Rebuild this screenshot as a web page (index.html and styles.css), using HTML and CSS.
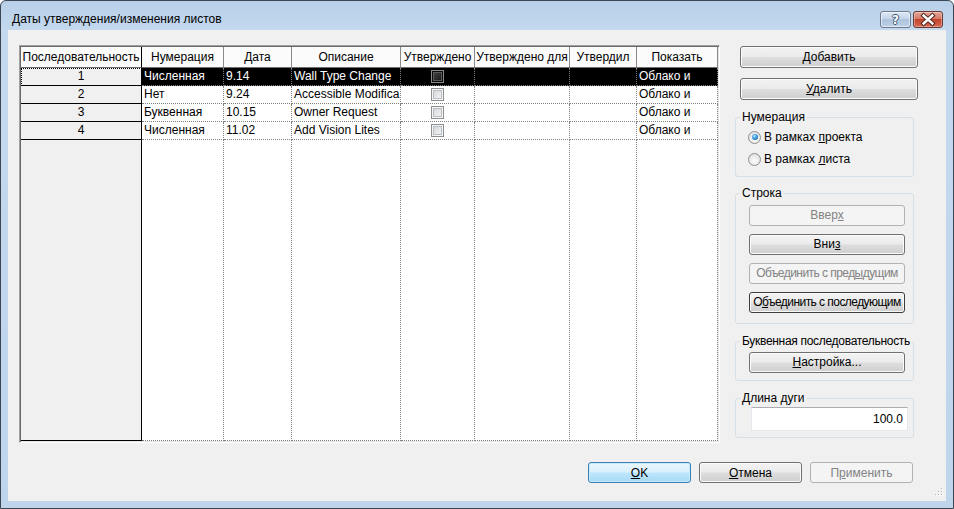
FILE: index.html
```html
<!DOCTYPE html>
<html lang="ru">
<head>
  <meta charset="UTF-8">
  <title>Даты утверждения/изменения листов</title>
  <link rel="stylesheet" href="styles.css">
</head>
<body>
<div class="window">
  <div class="titlebar">
    <span class="title">Даты утверждения/изменения листов</span>
    <div class="caption">
      <button class="cap cap-help">?</button>
      <button class="cap cap-close">
        <svg width="29" height="15" viewBox="0 0 29 15">
          <path d="M10 3.5 L19 11.5 M19 3.5 L10 11.5" stroke="#4b2520" stroke-width="4.6" stroke-linecap="square"/>
          <path d="M10 3.5 L19 11.5 M19 3.5 L10 11.5" stroke="#fff" stroke-width="2.6" stroke-linecap="square"/>
        </svg>
      </button>
    </div>
  </div>

  <div class="client">
    <div class="main">
      <div class="sheet">
        <div class="row head">
          <div class="cell rh">Последовательность</div>
          <div class="cell">Нумерация</div>
          <div class="cell">Дата</div>
          <div class="cell">Описание</div>
          <div class="cell">Утверждено</div>
          <div class="cell">Утверждено для</div>
          <div class="cell">Утвердил</div>
          <div class="cell">Показать</div>
        </div>
        <div class="row sel">
          <div class="cell rh focus">1</div>
          <div class="cell">Численная</div>
          <div class="cell">9.14</div>
          <div class="cell">Wall Type Change</div>
          <div class="cell chk"><span class="box"></span></div>
          <div class="cell"></div>
          <div class="cell"></div>
          <div class="cell">Облако и</div>
        </div>
        <div class="row">
          <div class="cell rh">2</div>
          <div class="cell">Нет</div>
          <div class="cell">9.24</div>
          <div class="cell">Accessible Modifica</div>
          <div class="cell chk"><span class="box"></span></div>
          <div class="cell"></div>
          <div class="cell"></div>
          <div class="cell">Облако и</div>
        </div>
        <div class="row">
          <div class="cell rh">3</div>
          <div class="cell">Буквенная</div>
          <div class="cell">10.15</div>
          <div class="cell">Owner Request</div>
          <div class="cell chk"><span class="box"></span></div>
          <div class="cell"></div>
          <div class="cell"></div>
          <div class="cell">Облако и</div>
        </div>
        <div class="row">
          <div class="cell rh">4</div>
          <div class="cell">Численная</div>
          <div class="cell">11.02</div>
          <div class="cell">Add Vision Lites</div>
          <div class="cell chk"><span class="box"></span></div>
          <div class="cell"></div>
          <div class="cell"></div>
          <div class="cell">Облако и</div>
        </div>
        <div class="row filler">
          <div class="cell rh"></div>
          <div class="cell"></div>
          <div class="cell"></div>
          <div class="cell"></div>
          <div class="cell"></div>
          <div class="cell"></div>
          <div class="cell"></div>
          <div class="cell"></div>
        </div>
      </div>

      <div class="side">
        <button class="btn wide"><u>Д</u>обавить</button>
        <button class="btn wide gap"><u>У</u>далить</button>

        <fieldset class="group">
          <legend>Нумерация</legend>
          <div class="body b-num">
            <label class="radio on"><span class="dot"></span><span>В рамках <u>п</u>роекта</span></label>
            <label class="radio"><span class="dot"></span><span>В рамках <u>л</u>иста</span></label>
          </div>
        </fieldset>

        <fieldset class="group g-row">
          <legend>Строка</legend>
          <div class="body b-row">
            <div class="btn inner off">Ввер<u>х</u></div>
            <div class="btn inner">Вни<u>з</u></div>
            <div class="btn inner long off">Объединить с пред<u>ы</u>дущим</div>
            <div class="btn inner long strong">О<u>б</u>ъединить с последующим</div>
          </div>
        </fieldset>

        <fieldset class="group">
          <legend class="tight">Буквенная последовательность</legend>
          <div class="body b-alpha">
            <div class="btn inner"><u>Н</u>астройка...</div>
          </div>
        </fieldset>

        <fieldset class="group">
          <legend><u>Д</u>лина дуги</legend>
          <div class="body b-arc">
            <div class="field">100.0</div>
          </div>
        </fieldset>
      </div>
    </div>

    <div class="footer">
      <button class="btn foot def"><u>О</u>K</button>
      <button class="btn foot"><u>О</u>тмена</button>
      <button class="btn foot off">П<u>р</u>именить</button>
    </div>

    <svg class="grip" width="10" height="10" viewBox="0 0 10 10">
      <rect x="8" y="0" width="1" height="1" fill="#b8b8b8"/>
      <rect x="5" y="3" width="1" height="1" fill="#b8b8b8"/>
      <rect x="8" y="3" width="1" height="1" fill="#b8b8b8"/>
      <rect x="2" y="6" width="1" height="1" fill="#b8b8b8"/>
      <rect x="5" y="6" width="1" height="1" fill="#b8b8b8"/>
      <rect x="8" y="6" width="1" height="1" fill="#b8b8b8"/>
      <rect x="9" y="1" width="1" height="1" fill="#fff"/>
      <rect x="6" y="4" width="1" height="1" fill="#fff"/>
      <rect x="9" y="4" width="1" height="1" fill="#fff"/>
      <rect x="3" y="7" width="1" height="1" fill="#fff"/>
      <rect x="6" y="7" width="1" height="1" fill="#fff"/>
      <rect x="9" y="7" width="1" height="1" fill="#fff"/>
    </svg>
  </div>
</div>
</body>
</html>
```

FILE: styles.css
```css
body {
  margin: 0;
  background-color: #ffffff;
  font-family: "Liberation Sans", Arial, sans-serif;
  font-size: 12px;
  color: #000000;
}
.window {
  width: 954px;
  height: 509px;
  box-sizing: border-box;
  border: 1px solid #3b4652;
  border-radius: 6px 6px 0 0;
  background: linear-gradient(#b7cfe8, #c4d9ee 30px, #bfd5ec);
  padding: 0 7px 7px;
  display: flex;
  flex-direction: column;
}
.titlebar {
  height: 29px;
  display: flex;
  justify-content: space-between;
  align-items: flex-start;
  padding: 0 3px 0 4px;
}
.title {
  margin-top: 11px;
  line-height: 14px;
}
.caption {
  display: flex;
  gap: 2px;
  margin-top: 10px;
}
.cap {
  width: 31px;
  height: 17px;
  padding: 0;
  border-radius: 3px;
  display: flex;
  align-items: center;
  justify-content: center;
}
.cap-help {
  border: 1px solid #6b7a8c;
  background: linear-gradient(#dce7f3, #c5d6e9 45%, #adc3dc 50%, #bdd2e8);
  box-shadow: inset 0 0 0 1px rgba(255, 255, 255, 0.55);
  color: #ffffff;
  font-family: "DejaVu Sans", sans-serif;
  font-weight: bold;
  font-size: 12px;
  text-shadow: 1px 0 #3f5672, -1px 0 #3f5672, 0 1px #3f5672, 0 -1px #3f5672;
}
.cap-close {
  width: 30px;
  border: 1px solid #6a3a32;
  background: linear-gradient(#e4a596, #d47a68 45%, #c4432e 50%, #d56a4f);
  box-shadow: inset 0 0 0 1px rgba(255, 255, 255, 0.35);
}
.client {
  flex: 1;
  position: relative;
  background-color: #f0f0f0;
  padding: 15px 0 0 11px;
}
.main {
  display: flex;
  align-items: flex-start;
}

/* grid */
.sheet {
  width: 697px;
  height: 394px;
  border: 1px solid;
  border-color: #a0a0a0 #ffffff #ffffff #a0a0a0;
  padding: 1px;
  box-shadow: inset 1px 1px #696969, inset -1px -1px #e3e3e3;
  background-color: #ffffff;
  display: flex;
  flex-direction: column;
}
.row {
  display: grid;
  grid-template-columns: 121px 82px 68px 109px 74px 95px 67px 81px;
  height: 18px;
}
.cell {
  box-sizing: border-box;
  border-right: 1px dotted #808080;
  border-bottom: 1px dotted #808080;
  padding: 0 2px;
  line-height: 17px;
  white-space: nowrap;
  overflow: hidden;
}
.cell.rh {
  background-color: #f0f0f0;
  border-right: 1px solid #000000;
  border-bottom: 1px solid #000000;
  text-align: center;
}
.head {
  height: 21px;
}
.head .cell {
  background-color: #fbfbfb;
  border-right: 1px solid #8a8a8a;
  border-bottom: 1px solid #6e6e6e;
  text-align: center;
  line-height: 20px;
  padding: 0 1px;
}
.head .cell.rh {
  border-right-color: #000000;
  background-color: #fbfbfb;
}
.sel .cell {
  background-color: #000000;
  color: #ffffff;
}
.sel .cell.rh {
  background-color: #f0f0f0;
  color: #000000;
}
.focus {
  outline: 1px dotted #000000;
  outline-offset: -1px;
}
.filler {
  flex: 1;
}
.chk {
  display: flex;
  align-items: center;
  justify-content: center;
}
.box {
  width: 13px;
  height: 13px;
  box-sizing: border-box;
  border: 1px solid #8e8f8f;
  background: linear-gradient(135deg, #cfd3d8, #f8f8f8);
  box-shadow: inset 0 0 0 1px #f6f6f6, inset 0 0 0 2px #b9bec4;
}
.sel .box {
  border-color: #8a8a8a;
  background: linear-gradient(135deg, #4a4a4a, #111111);
  box-shadow: inset 0 0 0 1px #0a0a0a, inset 0 0 0 2px #5a5a5a;
}

/* right column */
.side {
  width: 183px;
  margin-left: 15px;
  padding-top: 1px;
  display: flex;
  flex-direction: column;
}
.btn {
  box-sizing: border-box;
  height: 21px;
  padding: 0;
  border: 1px solid #707070;
  border-radius: 3px;
  background: linear-gradient(#f3f3f3, #ebebeb 48%, #dddddd 52%, #cfcfcf);
  box-shadow: inset 0 0 0 1px #fbfbfb;
  font: inherit;
  color: #000000;
  white-space: nowrap;
  overflow: hidden;
}
.btn.off {
  border-color: #adb2b5;
  background: #f4f4f4;
  box-shadow: none;
  color: #838383;
}
.btn.wide {
  width: 178px;
  height: 22px;
  margin-left: 5px;
}
.btn.gap {
  margin-top: 10px;
}
.group {
  box-sizing: border-box;
  width: 179px;
  min-width: 0;
  margin: 10px 0 0;
  padding: 0;
  border: 1px solid #d5dfe5;
  border-radius: 3px;
}
.group legend {
  margin-left: 4px;
  padding: 0 2px;
  line-height: 14px;
  white-space: nowrap;
}
.group legend.tight {
  letter-spacing: -0.3px;
}
.body {
  display: flex;
  flex-direction: column;
  align-items: flex-start;
}
.b-num {
  padding: 2px 0 6px 12px;
}
.radio {
  display: flex;
  align-items: center;
  height: 22px;
}
.dot {
  position: relative;
  width: 13px;
  height: 13px;
  box-sizing: border-box;
  margin-right: 3px;
  border: 1px solid #8e8f8f;
  border-radius: 50%;
  background: radial-gradient(circle at 50% 60%, #ffffff, #d6d6d6);
}
.radio.on .dot::after {
  content: "";
  position: absolute;
  inset: 2.5px;
  border-radius: 50%;
  background: radial-gradient(circle at 40% 35%, #a6e4fd, #2c8ad0 55%, #0d4a7e);
}
.g-row {
  margin-top: 9px;
}
.b-row {
  padding: 5px 0 10px 13px;
  gap: 8px;
}
.btn.inner {
  width: 156px;
  line-height: 19px;
  text-align: center;
}
.btn.long {
  letter-spacing: -0.55px;
}
.btn.strong {
  border-color: #3d3d3d;
}
.b-alpha {
  padding: 4px 0 7px 13px;
}
.b-arc {
  padding: 2px 0 6px 15px;
}
.field {
  box-sizing: border-box;
  width: 157px;
  height: 24px;
  border: 1px solid #e3e9ef;
  border-top-color: #abadb3;
  background-color: #ffffff;
  text-align: right;
  padding-right: 4px;
  line-height: 22px;
}

/* bottom buttons */
.footer {
  display: flex;
  justify-content: flex-end;
  gap: 8px;
  margin-top: 19px;
  padding-right: 33px;
}
.btn.foot {
  width: 103px;
}
.btn.def {
  border-color: #3c7fb1;
  background: linear-gradient(#eaf6fd, #d9f0fc 48%, #bee6fd 52%, #a7d9f5);
  box-shadow: inset 0 0 0 1px #c6ecfd;
}
.grip {
  position: absolute;
  right: 3px;
  bottom: 3px;
}
```
